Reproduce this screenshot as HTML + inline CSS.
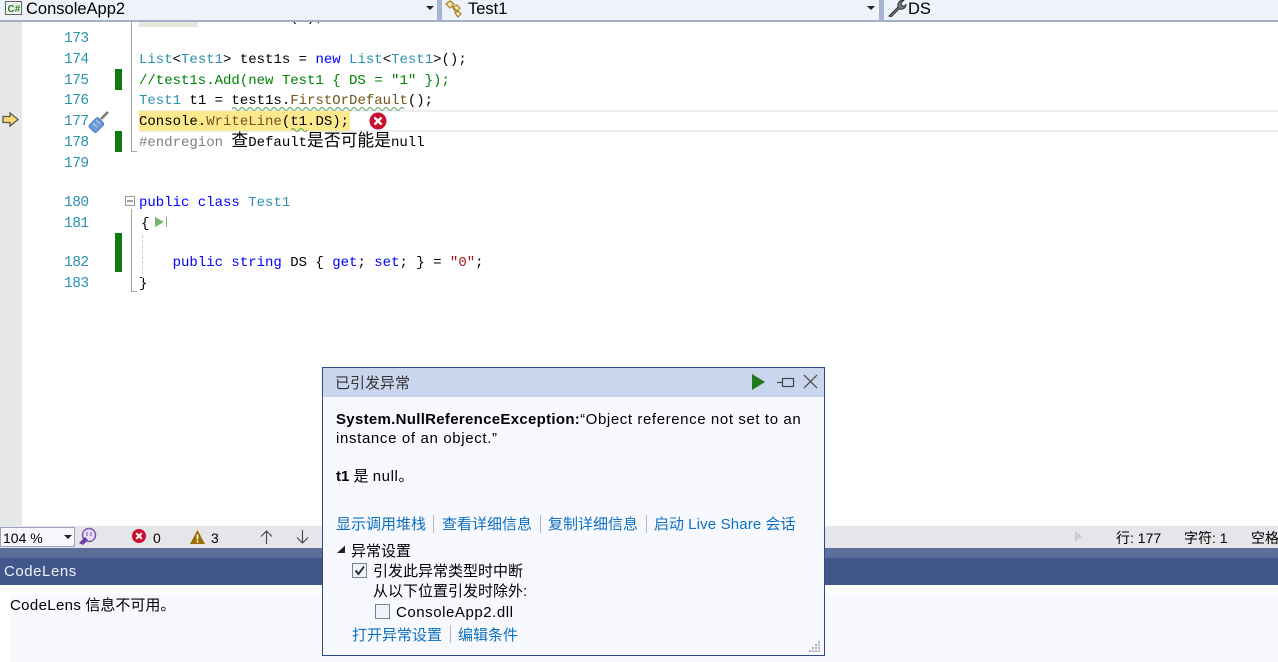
<!DOCTYPE html>
<html><head><meta charset="utf-8">
<style>
html,body{margin:0;padding:0;width:1278px;height:662px;overflow:hidden;background:#fff}
*{box-sizing:border-box}
.a{position:absolute;white-space:pre}
.ui{font-family:"Liberation Sans","Noto Sans CJK SC",sans-serif;font-size:15px;color:#000;line-height:20px}
.ln{position:absolute;left:64px;font:14.5px/20px "Liberation Mono",monospace;color:#2b91af;width:26px;letter-spacing:-.5px}
.c{position:absolute;left:139px;font:14px/20px "Liberation Mono",monospace;color:#000;white-space:pre}
.c i{font-style:normal;font-family:"Noto Sans CJK SC",sans-serif;font-size:16.8px;line-height:0}
.k{color:#00f}.t{color:#2b91af}.g{color:#008000}.s{color:#a31515}.m{color:#808080}
.link{color:#0e70c0}
.sep{position:absolute;width:1px;background:#b5b8c4}
.grn{position:absolute;left:115px;width:7px;background:#107c10}
.r{position:absolute;background:#a5a5a5}
.lat{letter-spacing:.55px}
</style></head><body>

<!-- clipped line 172 -->
<div class="ln" style="top:8px">172</div>
<div class="c" style="top:8px;left:290px">( );</div>

<!-- nav bar -->
<div class="a" style="left:0;top:0;width:1278px;height:22px;background:#eef2fb;border-bottom:2px solid #a4b0ca"></div>
<div class="a" style="left:437px;top:0;width:5px;height:20px;background:#a5b4d3"></div>
<div class="a" style="left:879px;top:0;width:5px;height:20px;background:#a5b4d3"></div>
<svg class="a" style="left:5px;top:1px" width="18" height="15"><rect x=".5" y=".5" width="16" height="13" fill="#f2f5ee" stroke="#666"/><text x="2.5" y="11" font-family="Liberation Sans" font-size="10" font-weight="bold" fill="#2f7d32">C#</text></svg>
<div class="a ui" style="left:26px;top:-1px;font-size:16.5px">ConsoleApp2</div>
<svg class="a" style="left:426px;top:6px" width="8" height="5"><path d="M0 0H8L4 4Z" fill="#222"/></svg>
<svg class="a" style="left:867px;top:6px" width="8" height="5"><path d="M0 0H8L4 4Z" fill="#222"/></svg>
<svg class="a" style="left:445px;top:0" width="22" height="18"><path d="M1 4L5 1 9 4 5 8ZM8 7l4-2 3 3-3 3zM10 13l3-2 3 3-3 3zM7 6l4 7" fill="#f5e8c0" stroke="#a8811f" stroke-width="1.200"/></svg>
<div class="a ui" style="left:468px;top:-1px;font-size:16.5px">Test1</div>
<svg class="a" style="left:887px;top:0" width="20" height="17"><path d="M2 16L11 7C10 3 13 0 17 0L14 3l1 3 3 0 1-2C19 8 16 10 12 9L4 17Z" fill="#777" stroke="#333" stroke-width="1"/></svg>
<div class="a ui" style="left:908px;top:-1px;font-size:16.5px">DS</div>

<!-- editor -->
<div class="a" style="left:0;top:22px;width:22px;height:504px;background:#e6e7e8"></div>
<div class="a" style="left:139px;top:22px;width:59px;height:5px;background:#e3e8da"></div>
<div class="a" style="left:131px;top:22px;width:1px;height:130px;background:#a5a5a5"></div>
<div class="r" style="left:131px;top:151px;width:6px;height:1px"></div>
<div class="a" style="left:139px;top:110px;width:1139px;height:22px;border-top:2px solid #eeeef2;border-bottom:2px solid #eeeef2"></div>
<div class="a" style="left:139px;top:111px;width:211px;height:20px;background:#fde98d"></div>

<div class="ln" style="top:29px">173</div>
<div class="ln" style="top:50px">174</div>
<div class="ln" style="top:71px">175</div>
<div class="ln" style="top:91px">176</div>
<div class="ln" style="top:112px">177</div>
<div class="ln" style="top:133px">178</div>
<div class="ln" style="top:154px;">179</div>
<div class="ln" style="top:193px">180</div>
<div class="ln" style="top:214px">181</div>
<div class="ln" style="top:253px">182</div>
<div class="ln" style="top:274px">183</div>

<div class="grn" style="top:69px;height:21px"></div>
<div class="grn" style="top:131px;height:21px"></div>
<div class="grn" style="top:233px;height:39px"></div>

<div class="c" style="top:50px"><span class="t">List</span>&lt;<span class="t">Test1</span>&gt; test1s = <span class="k">new</span> <span class="t">List</span>&lt;<span class="t">Test1</span>&gt;();</div>
<div class="c g" style="top:71px">//test1s.Add(new Test1 { DS = "1" });</div>
<div class="c" style="top:91px"><span class="t">Test1</span> t1 = test1s.<span style="color:#74531f">FirstOrDefault</span>();</div>
<div class="c" style="top:112px">Console.<span style="color:#74531f">WriteLine</span>(t1.DS);</div>
<div class="c" style="top:133px"><span class="m">#endregion</span> <i>查</i>Default<i>是否可能是</i>null</div>
<div class="c" style="top:193px"><span class="k">public class</span> <span class="t">Test1</span></div>
<div class="c" style="top:214px;left:141px">{</div>
<div class="c" style="top:253px">    <span class="k">public string</span> DS { <span class="k">get</span>; <span class="k">set</span>; } = <span class="s">"0"</span>;</div>
<div class="c" style="top:274px">}</div>

<svg class="a" style="left:232px;top:106px" width="195" height="5"><path d="M0 3q2-3 4 0t4 0 4 0 4 0 4 0 4 0 4 0 4 0 4 0 4 0 4 0 4 0 4 0 4 0 4 0 4 0 4 0 4 0 4 0 4 0 4 0 4 0 4 0 4 0 4 0 4 0 4 0 4 0 4 0 4 0 4 0 4 0 4 0 4 0 4 0 4 0 4 0 4 0 4 0 4 0 4 0 4 0 4 0" fill="none" stroke="#5aa55a" stroke-width="1"/></svg>
<svg class="a" style="left:291px;top:127px" width="17" height="5"><path d="M0 3q2-3 4 0t4 0 4 0 4 0" fill="none" stroke="#5aa55a" stroke-width="1"/></svg>

<svg class="a" style="left:369px;top:112px" width="18" height="18"><circle cx="9" cy="9" r="8.500" fill="#c8102e"/><path d="M5.500 5.500l7 7M12.500 5.500l-7 7" stroke="#fff" stroke-width="2.400"/></svg>
<svg class="a" style="left:2px;top:112px" width="17" height="15"><path d="M1 4.500H8V1L16 7.500 8 14V10.500H1Z" fill="#fcd975" stroke="#5c5a45" stroke-width="1.300"/></svg>
<svg class="a" style="left:88px;top:110px" width="23" height="23"><path d="M13 9L20 2" stroke="#777" stroke-width="2.500"/><rect x="-4" y="-6" width="10" height="13" rx="2" transform="translate(8 14) rotate(45)" fill="#6d9bd8" stroke="#4a7dbf"/><path d="M5 13l4 4M8 10l4 4" stroke="#b9d0ee"/></svg>

<!-- outline -->
<svg class="a" style="left:125px;top:196px" width="11" height="11"><rect x=".5" y=".5" width="9" height="9" fill="#fff" stroke="#9a9a9a"/><path d="M2 5H8" stroke="#444"/></svg>
<div class="a" style="left:131px;top:209px;width:1px;height:82px;background:#a5a5a5"></div>
<div class="r" style="left:131px;top:291px;width:6px;height:1px"></div>
<div class="a" style="left:142px;top:235px;height:50px;border-left:1px dashed #c8c8c8"></div>
<svg class="a" style="left:155px;top:216px" width="13" height="12"><path d="M0 1L9 6 0 11Z" fill="#73b673"/><path d="M11.500 1V11" stroke="#73b673"/></svg>

<!-- status bar -->
<div class="a" style="left:0;top:526px;width:1278px;height:22px;background:#e6e6ea"></div>
<div class="a" style="left:0;top:527px;width:75px;height:20px;background:#f6f7fc;border:1px solid #9aa5bd"></div>
<div class="a ui" style="left:3px;top:528px;font-size:14px">104 %</div>
<svg class="a" style="left:64px;top:535px" width="8" height="5"><path d="M0 0H8L4 4Z" fill="#222"/></svg>
<svg class="a" style="left:78px;top:527px" width="20" height="19"><circle cx="11" cy="8" r="6.500" fill="#e8dcf5" stroke="#7a55b5" stroke-width="1.500"/><path d="M1 16l6-6 3 3-5 5z" fill="#68409f"/><path d="M9 5v4M13 5v4" stroke="#7a55b5"/></svg>
<svg class="a" style="left:132px;top:529px" width="14" height="14"><circle cx="7" cy="7" r="7" fill="#c8102e"/><path d="M4.200 4.200l5.600 5.600M9.800 4.200l-5.600 5.600" stroke="#fff" stroke-width="2"/></svg>
<div class="a ui" style="left:153px;top:528px;font-size:14px">0</div>
<svg class="a" style="left:190px;top:530px" width="15" height="14"><path d="M7.500 0L15 14H0Z" fill="#9a6f00"/><path d="M7.500 4.500v5M7.500 10.500v2" stroke="#fff" stroke-width="1.600"/></svg>
<div class="a ui" style="left:211px;top:528px;font-size:14px">3</div>
<svg class="a" style="left:260px;top:530px" width="14" height="14"><path d="M6.500 14V1M1 6.500L6.500 1 12 6.500" fill="none" stroke="#444" stroke-width="1.100"/></svg>
<svg class="a" style="left:296px;top:530px" width="14" height="14"><path d="M6.500 0V13M1 7.500L6.500 13 12 7.500" fill="none" stroke="#444" stroke-width="1.100"/></svg>
<svg class="a" style="left:1075px;top:531px" width="8" height="12"><path d="M0 0L7 5.500 0 11Z" fill="#c9ccd4"/></svg>
<div class="a ui" style="left:1116px;top:528px;font-size:14px">行: 177</div>
<div class="a ui" style="left:1184px;top:528px;font-size:14px">字符: 1</div>
<div class="a ui" style="left:1251px;top:528px;font-size:14px">空格</div>

<!-- bottom panel -->
<div class="a" style="left:0;top:548px;width:1278px;height:10px;background:#5e6e9a"></div>
<div class="a" style="left:0;top:558px;width:1278px;height:27px;background:#41578c"></div>
<div class="a ui lat" style="left:4px;top:562px;color:#f0f2f8">CodeLens</div>
<div class="a" style="left:10px;top:595px;width:1268px;height:67px;background:#f8f9fe"></div>
<div class="a ui" style="left:10px;top:596px"><span style="letter-spacing:.35px">CodeLens</span> 信息不可用。</div>

<!-- popup -->
<div class="a" style="left:322px;top:367px;width:503px;height:289px;background:#f8f9fe;border:1px solid #2c4a85"></div>
<div class="a" style="left:323px;top:368px;width:501px;height:29px;background:#cad5ee"></div>
<div class="a ui" style="left:335px;top:374px;color:#333;font-size:15px">已引发异常</div>
<svg class="a" style="left:752px;top:374px" width="14" height="16"><path d="M0 0L13 8 0 16Z" fill="#1f7a1f"/></svg>
<svg class="a" style="left:777px;top:376px" width="18" height="13"><path d="M0 6.500H5" stroke="#444" stroke-width="1.200"/><rect x="5.500" y="2.500" width="11" height="8" fill="none" stroke="#444" stroke-width="1.200"/></svg>
<svg class="a" style="left:803px;top:374px" width="15" height="15"><path d="M1 1L14 14M14 1L1 14" stroke="#444" stroke-width="1.200"/></svg>

<div class="a ui" style="left:336px;top:410px"><b style="letter-spacing:.3px">System.NullReferenceException:</b><span style="letter-spacing:.6px">“Object reference not set to an</span></div>
<div class="a ui" style="left:336px;top:429px;letter-spacing:.65px">instance of an object.”</div>
<div class="a ui" style="left:336px;top:467px"><b>t1</b> 是 <span style="letter-spacing:.6px">null</span>。</div>

<div class="a ui link" style="left:336px;top:515px">显示调用堆栈</div>
<div class="sep" style="left:433px;top:515px;height:18px"></div>
<div class="a ui link" style="left:442px;top:515px">查看详细信息</div>
<div class="sep" style="left:540px;top:515px;height:18px"></div>
<div class="a ui link" style="left:548px;top:515px">复制详细信息</div>
<div class="sep" style="left:646px;top:515px;height:18px"></div>
<div class="a ui link" style="left:654px;top:515px">启动 <span style="letter-spacing:.15px">Live Share</span> 会话</div>

<svg class="a" style="left:337px;top:545px" width="9" height="9"><path d="M8 0.500V8H0Z" fill="#222"/></svg>
<div class="a ui" style="left:351px;top:542px">异常设置</div>
<div class="a" style="left:352px;top:563px;width:15px;height:15px;background:#f1f3fa;border:1px solid #7a8294"></div>
<svg class="a" style="left:354px;top:565px" width="12" height="11"><path d="M1.500 5.500L4.500 9 10 1.500" fill="none" stroke="#222" stroke-width="1.800"/></svg>
<div class="a ui" style="left:373px;top:562px">引发此异常类型时中断</div>
<div class="a ui" style="left:373px;top:582px">从以下位置引发时除外:</div>
<div class="a" style="left:375px;top:604px;width:15px;height:15px;background:#f1f3fa;border:1px solid #7a8294"></div>
<div class="a ui lat" style="left:396px;top:603px">ConsoleApp2.dll</div>
<div class="a ui link" style="left:352px;top:626px">打开异常设置</div>
<div class="sep" style="left:450px;top:625px;height:18px"></div>
<div class="a ui link" style="left:458px;top:626px">编辑条件</div>
<svg class="a" style="left:808px;top:640px" width="14" height="14"><g fill="#b5b8c4"><rect x="10" y="1" width="2" height="2"/><rect x="7" y="4" width="2" height="2"/><rect x="10" y="4" width="2" height="2"/><rect x="4" y="7" width="2" height="2"/><rect x="7" y="7" width="2" height="2"/><rect x="10" y="7" width="2" height="2"/><rect x="1" y="10" width="2" height="2"/><rect x="4" y="10" width="2" height="2"/><rect x="7" y="10" width="2" height="2"/><rect x="10" y="10" width="2" height="2"/></g></svg>
</body></html>
